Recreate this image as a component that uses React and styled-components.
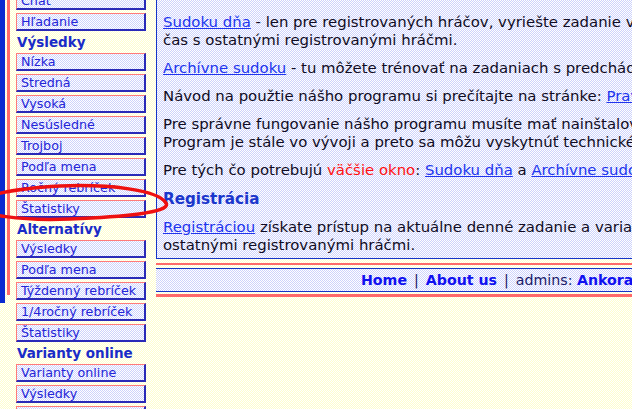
import React from 'react';
import styled, { createGlobalStyle } from 'styled-components';

const GlobalStyle = createGlobalStyle`
  html, body {
    margin: 0;
    padding: 0;
    overflow: hidden;
  }
  body {
    background: repeating-conic-gradient(#ffffcc 0% 25%, #ffffff 0% 50%) 0 0 / 2px 2px;
    font-family: "DejaVu Sans", Verdana, sans-serif;
  }
`;

const bluePattern = 'repeating-conic-gradient(#cdd2fb 0% 25%, #ffffff 0% 50%) 0 0 / 2px 2px';

const Page = styled.div`
  position: relative;
  display: flex;
  align-items: flex-start;
  width: 1000px;
  margin-top: -8px;
`;

const Rail = styled.div`
  flex: none;
  width: 16px;
  display: flex;
  align-items: flex-start;
  gap: 2px;
`;

const Bar = styled.div`
  width: ${p => p.$w}px;
  height: ${p => p.$h}px;
  background: ${p => p.$color};
`;

const Nav = styled.div`
  flex: none;
  width: 130px;
  display: flex;
  flex-direction: column;
  gap: 3px;
`;

const NavHeading = styled.div`
  height: 16px;
  line-height: 16px;
  padding-left: 1px;
  font-size: 13.5px;
  font-weight: bold;
  color: #1a2cc8;
  white-space: nowrap;
`;

const NavItem = styled.a`
  display: block;
  box-sizing: border-box;
  height: 18px;
  line-height: 15px;
  padding-left: 4px;
  border-top: 1px solid #ff7a7a;
  border-left: 1px solid #ff7a7a;
  border-right: 2px solid #2a2ab8;
  border-bottom: 2px solid #2a2ab8;
  background: ${bluePattern};
  font-size: 12.7px;
  color: #2424d8;
  text-decoration: none;
  white-space: nowrap;
  overflow: hidden;
`;

const MainCol = styled.div`
  flex: 1;
  margin-left: 10px;
`;

const ContentBox = styled.div`
  border: 1px solid #1534c8;
  background: ${bluePattern};
  padding: 20px 8px 4px 6px;
  font-size: 14.9px;
  line-height: 18px;
  color: #100c24;
`;

const Para = styled.p`
  margin: 0 0 10px;
  white-space: nowrap;
  &:last-child {
    margin-bottom: 0;
  }
`;

const Link = styled.a`
  color: #2034ee;
  text-decoration: underline;
`;

const Alert = styled.span`
  color: #ff1010;
`;

const Heading = styled.h2`
  margin: 9px 0 9px;
  font-size: 15.2px;
  line-height: 20px;
  font-weight: bold;
  color: #1a36cc;
`;

const Footer = styled.div`
  margin-top: 4px;
  border-top: 2px solid #ff6a6a;
  border-bottom: 3px solid #ff6a6a;
  padding: 3px 0 2px;
`;

const FooterInner = styled.div`
  border-top: 1px solid #1534c8;
  border-bottom: 1px solid #1534c8;
  background: ${bluePattern};
  height: 22px;
  line-height: 22px;
  padding-left: 205px;
  font-size: 14.2px;
  color: #1a1a6a;
  white-space: nowrap;
`;

const FooterLink = styled.a`
  font-weight: bold;
  color: #1010f0;
  text-decoration: none;
`;

const Sep = styled.span`
  padding: 0 7px;
  color: #1a1a6a;
`;

const Circle = styled.svg`
  position: absolute;
  left: 0;
  top: 8px;
  width: 200px;
  height: 240px;
  pointer-events: none;
  overflow: visible;
`;

const groups = [
  { items: ['Chat', 'Hľadanie'] },
  {
    title: 'Výsledky',
    items: ['Nízka', 'Stredná', 'Vysoká', 'Nesúsledné', 'Trojboj', 'Podľa mena', 'Ročný rebríček', 'Štatistiky'],
  },
  {
    title: 'Alternatívy',
    items: ['Výsledky', 'Podľa mena', 'Týždenný rebríček', '1/4ročný rebríček', 'Štatistiky'],
  },
  { title: 'Varianty online', items: ['Varianty online', 'Výsledky', 'Podľa mena'] },
];

export default function App() {
  return (
    <>
      <GlobalStyle />
      <Page>
        <Rail>
          <Bar $w={5} $h={311} $color="#0a2ad0" />
          <Bar $w={3} $h={303} $color="#ff6a6a" />
        </Rail>
        <Nav>
          {groups.map((g, gi) => (
            <React.Fragment key={gi}>
              {g.title && <NavHeading>{g.title}</NavHeading>}
              {g.items.map((it, i) => (
                <NavItem key={i} href="#">{it}</NavItem>
              ))}
            </React.Fragment>
          ))}
        </Nav>
        <MainCol>
          <ContentBox>
            <Para>
              <Link href="#">Sudoku dňa</Link> - len pre registrovaných hráčov, vyriešte zadanie v čo najkratšom
              <br />
              čas s ostatnými registrovanými hráčmi.
            </Para>
            <Para>
              <Link href="#">Archívne sudoku</Link> - tu môžete trénovať na zadaniach s predchádzajúcich dní.
            </Para>
            <Para>
              Návod na použtie nášho programu si prečítajte na stránke: <Link href="#">Pravidlá</Link>
            </Para>
            <Para>
              Pre správne fungovanie nášho programu musíte mať nainštalovanú Javu.
              <br />
              Program je stále vo vývoji a preto sa môžu vyskytnúť technické problémy.
            </Para>
            <Para>
              Pre tých čo potrebujú <Alert>väčšie okno</Alert>: <Link href="#">Sudoku dňa</Link> a{' '}
              <Link href="#">Archívne sudoku</Link>
            </Para>
            <Heading>Registrácia</Heading>
            <Para>
              <Link href="#">Registráciou</Link> získate prístup na aktuálne denné zadanie a varianty a môžete sa porovnať s
              <br />
              ostatnými registrovanými hráčmi.
            </Para>
          </ContentBox>
          <Footer>
            <FooterInner>
              <FooterLink href="#">Home</FooterLink>
              <Sep>|</Sep>
              <FooterLink href="#">About us</FooterLink>
              <Sep>|</Sep>
              admins: <FooterLink href="#">Ankora</FooterLink>, <FooterLink href="#">Kubo</FooterLink>
            </FooterInner>
          </Footer>
        </MainCol>
        <Circle viewBox="0 0 200 240">
          <path
            d="M 166 203 C 158 190, 110 184, 60 186 C 10 189, -25 196, -22 206 C -20 215, 20 221, 70 219 C 120 217, 172 213, 166 203 Z"
            fill="none"
            stroke="#ee1010"
            strokeWidth="3.5"
          />
        </Circle>
      </Page>
    </>
  );
}
